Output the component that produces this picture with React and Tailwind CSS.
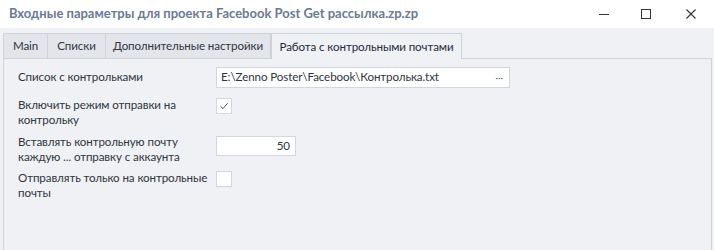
const tabs = [
  { label: 'Main', w: 'w-[45px]' },
  { label: 'Списки', w: 'w-[59px]' },
  { label: 'Дополнительные настройки', w: 'w-[166px]' },
]

function Checkbox({ checked }) {
  return (
    <div className="w-[16px] h-[16px] bg-white border border-[#d3d6dc] flex items-center justify-center">
      {checked && (
        <svg width="10" height="10" viewBox="0 0 10 10" fill="none">
          <path d="M1.5 5.2 L4 7.6 L8.6 2.2" stroke="#555" strokeWidth="1" />
        </svg>
      )}
    </div>
  )
}

export default function App() {
  return (
    <div className="w-[714px] h-[250px] bg-[#f0f1f5] text-[11.6px] text-[#2f3540] overflow-hidden" style={{ fontFamily: 'Lato, "Noto Sans", sans-serif' }}>
      <div className="h-[28px] bg-white flex items-center pl-[9px]">
        <div className="font-bold text-[13px] text-[#6a7a95] flex-1">
          Входные параметры для проекта Facebook Post Get рассылка.zp.zp
        </div>
        <div className="flex items-center text-[#333]">
          <div className="w-[40px] flex justify-center">
            <svg width="10" height="10" viewBox="0 0 10 10"><path d="M0 5.5 H10" stroke="#333" strokeWidth="1" /></svg>
          </div>
          <div className="w-[44px] flex justify-center">
            <svg width="10" height="10" viewBox="0 0 10 10"><rect x="0.5" y="0.5" width="9" height="9" fill="none" stroke="#333" strokeWidth="1" /></svg>
          </div>
          <div className="w-[46px] flex justify-center">
            <svg width="10" height="10" viewBox="0 0 10 10"><path d="M0.5 0.5 L9.5 9.5 M9.5 0.5 L0.5 9.5" stroke="#333" strokeWidth="1.1" /></svg>
          </div>
        </div>
      </div>

      <div className="pl-[3px] pr-[2px] pt-[4px] tracking-[-0.1px]">
        <div className="flex items-end h-[26px]">
          {tabs.map((t) => (
            <div key={t.label} className={`${t.w} h-[25px] bg-[#e3e5ea] border border-[#cfd2d9] border-b-0 -mr-px flex items-center justify-center`}>
              {t.label}
            </div>
          ))}
          <div className="w-[191px] h-[26px] ml-px bg-[#f0f1f5] border border-[#cfd2d9] border-b-0 flex items-center justify-center relative -mb-px z-10 text-[#252b3c]">
            Работа с контрольными почтами
          </div>
        </div>
        <div className="h-[200px] border border-[#cfd2d9] pl-[14px] pt-[7px]">
          <div className="flex items-center h-[22px]">
            <div className="w-[198px]">Список с контрольками</div>
            <div className="w-[294px] h-[21px] bg-white border border-[#d3d6dc] flex items-center pl-[4px] pr-[6px]">
              <span className="flex-1">E:\Zenno Poster\Facebook\Контролька.txt</span>
              <span className="text-[#666] text-[10px] leading-none">···</span>
            </div>
          </div>
          <div className="flex items-start mt-[9px]">
            <div className="w-[198px] pr-[8px] leading-[15px]">Включить режим отправки на контрольку</div>
            <div className="pt-[1px]"><Checkbox checked /></div>
          </div>
          <div className="flex items-start mt-[7px]">
            <div className="w-[198px] pr-[8px] leading-[15px]">Вставлять контрольную почту каждую ... отправку с аккаунта</div>
            <div className="w-[80px] h-[20px] bg-white border border-[#d3d6dc] flex items-center justify-end pr-[5px] mt-[2px]">50</div>
          </div>
          <div className="flex items-start mt-[6px]">
            <div className="w-[198px] pr-[4px] leading-[15px]">Отправлять только на контрольные почты</div>
            <div className="pt-[1px]"><Checkbox /></div>
          </div>
        </div>
      </div>
    </div>
  )
}
